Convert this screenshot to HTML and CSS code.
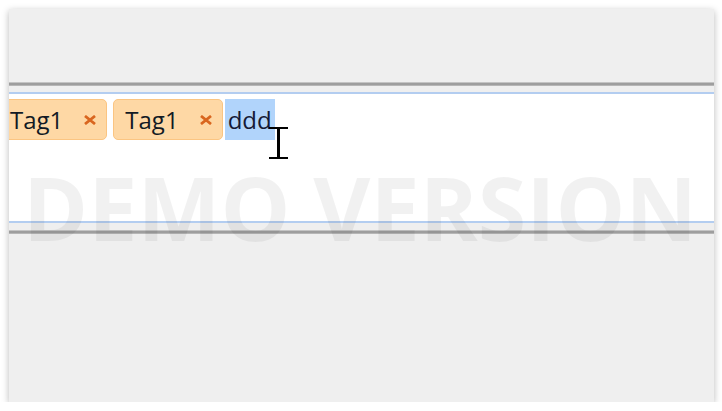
FILE: index.html
```html
<!DOCTYPE html>
<html lang="en">
<head>
	<meta charset="UTF-8">
	<link rel="stylesheet" href="styles.css">
</head>
<body>
	<div class="window">
		<div class="top-space"></div>
		<div class="rule"></div>
		<div class="gap"></div>
		<div class="editor">
			<div class="tags">
				<span class="tag">Tag1 <svg class="remove" width="14" height="10" viewBox="0 0 14 10"><path d="M2 1 L12 9 M12 1 L2 9" stroke="#d9661f" stroke-width="2.8" fill="none"/></svg></span>
				<span class="tag">Tag1 <svg class="remove" width="14" height="10" viewBox="0 0 14 10"><path d="M2 1 L12 9 M12 1 L2 9" stroke="#d9661f" stroke-width="2.8" fill="none"/></svg></span>
				<span class="typed">ddd</span>
			</div>
		</div>
		<div class="gap low"></div>
		<div class="rule"></div>
		<div class="watermark">DEMO VERSION</div>
		<div class="ibeam"></div>
	</div>
</body>
</html>
```

FILE: styles.css
```css
body {
	margin: 0;
	background: #ffffff;
}
.window {
	position: relative;
	margin: 9px 0 0 9px;
	width: 705px;
	height: 393px;
	background: #efefef;
	box-shadow: 0 2px 7px rgba(0,0,0,0.28);
	overflow: hidden;
}
.top-space {
	height: 73px;
}
.rule {
	height: 2px;
	background: #9e9e9e;
	border-top: 1px solid #c4c4c4;
	border-bottom: 1px solid #b6b6b6;
}
.gap {
	height: 6px;
}
.gap.low {
	height: 7px;
}
.editor {
	height: 127px;
	background: #ffffff;
	border-top: 2px solid #b3cdf0;
	border-bottom: 2px solid #b3cdf0;
	overflow: hidden;
}
.tags {
	display: flex;
	align-items: center;
	margin: 5px 0 0 -11px;
	font-family: "Open Sans", sans-serif;
	font-size: 24px;
	color: #121a24;
	white-space: nowrap;
}
.tag {
	display: flex;
	align-items: center;
	box-sizing: border-box;
	height: 41px;
	padding: 0 9px 0 11px;
	margin-right: 6px;
	background: #fed8a5;
	border: 1px solid #fbc582;
	border-radius: 5px;
}
.tag .remove {
	margin-left: 20px;
}
.typed {
	display: flex;
	align-items: center;
	height: 41px;
	margin-left: -4px;
	padding: 0 3px;
	background: #b1d4fb;
	color: #151a36;
}
.watermark {
	position: absolute;
	left: 14px;
	top: 138px;
	font-family: "Open Sans", sans-serif;
	font-weight: 700;
	font-size: 88px;
	color: rgba(0,0,0,0.055);
	white-space: nowrap;
	pointer-events: none;
}
.ibeam {
	position: absolute;
	left: 260px;
	top: 118px;
	width: 19px;
	height: 32px;
	border-top: 2px solid #000;
	border-bottom: 2px solid #000;
	box-sizing: border-box;
}
.ibeam:before {
	content: '';
	position: absolute;
	left: 8px;
	top: 0;
	width: 3px;
	height: 100%;
	background: #000;
}
```
